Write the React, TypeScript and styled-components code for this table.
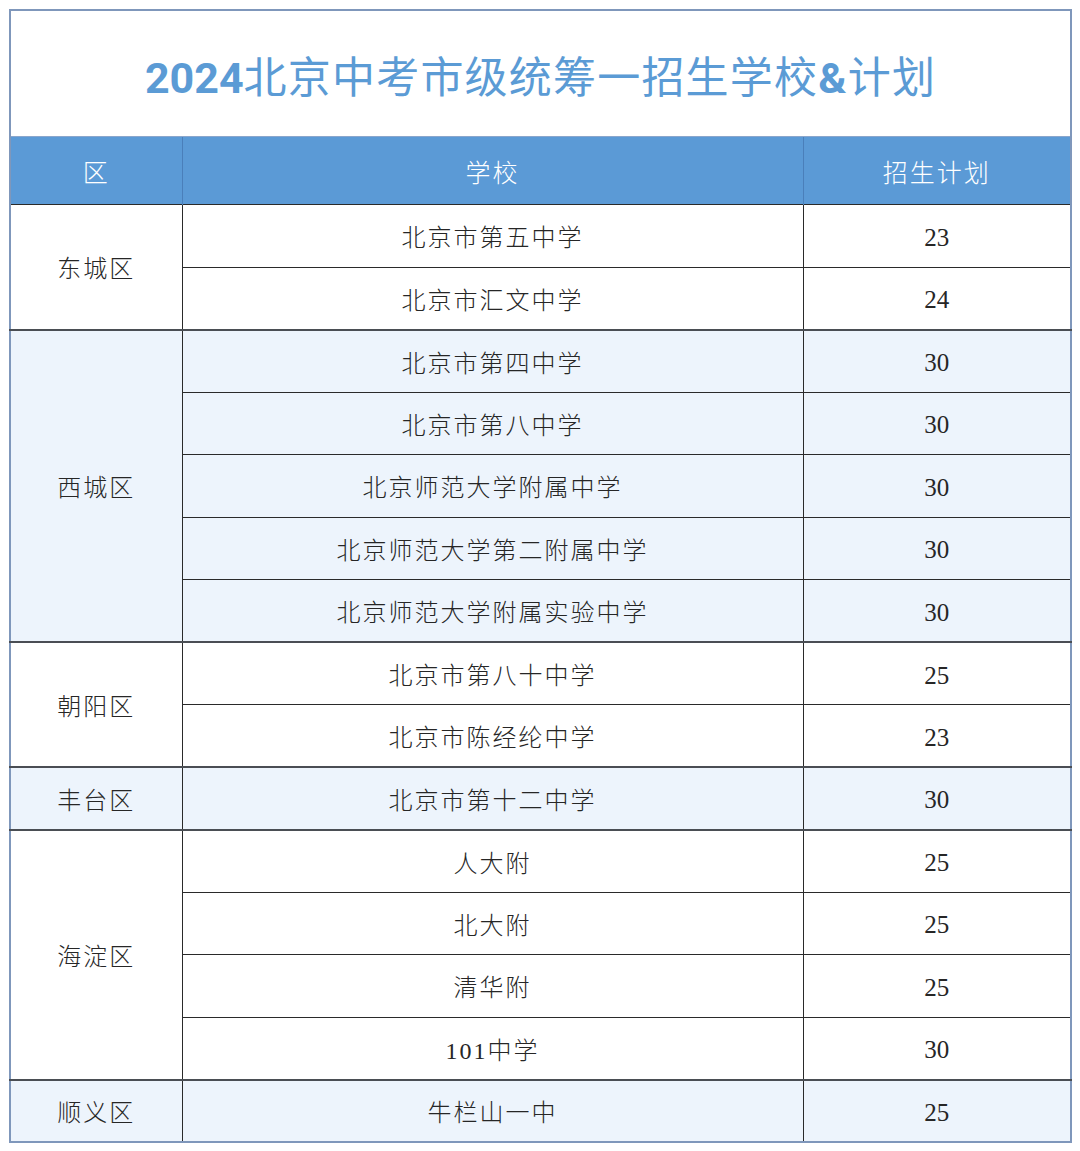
import React from "react";
import styled, { createGlobalStyle } from "styled-components";

const Global = createGlobalStyle`
  html, body { margin: 0; padding: 0; background: #ffffff; }
  body { font-family: "Liberation Serif", "Noto Sans CJK SC", serif; }
`;

const Page = styled.div`
  padding: 9px 0 0 9px;
  width: 1080px;
  box-sizing: border-box;
`;

const Table = styled.table`
  width: 1061px;
  border-collapse: collapse;
  table-layout: fixed;
  border: 2px solid #7f97bb;
`;

const Col = styled.col<{ $w: number }>`
  width: ${(p) => p.$w}px;
`;

const TitleCell = styled.th`
  height: 125px;
  padding: 0;
  background: #ffffff;
  color: #5b9bd5;
  font-family: "Noto Sans CJK SC", sans-serif;
  font-weight: 400;
  font-size: 43px;
  letter-spacing: 1.2px;
  text-align: center;
  vertical-align: middle;
  border-bottom: 1px solid #8aa6cc;
`;

const Year = styled.span`
  font-family: "Roboto", "Liberation Sans", sans-serif;
  font-weight: 700;
  font-size: 43px;
  letter-spacing: 0;
`;

const Amp = styled.span`
  font-family: "Roboto", "Liberation Sans", sans-serif;
  font-weight: 700;
`;

const HeadCell = styled.th`
  height: 67px;
  padding: 0;
  background: #5b9ad6;
  color: #ffffff;
  font-family: "Noto Sans CJK SC", sans-serif;
  font-weight: 300;
  font-size: 25px;
  letter-spacing: 2px;
  text-align: center;
  vertical-align: middle;
  border-left: 1px solid #4a7fba;
  &:first-child { border-left: none; }
`;

const Row = styled.tr<{ $tint: boolean }>`
  height: 62.5px;
  background: ${(p) => (p.$tint ? "#edf4fc" : "#ffffff")};
`;

const Cell = styled.td<{ $groupStart: boolean; $lead?: boolean }>`
  padding: 0;
  text-align: center;
  vertical-align: middle;
  color: #262626;
  font-family: "Liberation Serif", "Noto Sans CJK SC", serif;
  font-weight: 300;
  font-size: 24px;
  letter-spacing: 2px;
  border-left: ${(p) => (p.$lead ? "none" : "1.5px solid #2a2a2a")};
  border-top: ${(p) => (p.$groupStart ? "2px solid #4a4e54" : "1.5px solid #2a2a2a")};
`;

const NumCell = styled(Cell)`
  font-size: 25px;
  letter-spacing: 0;
  padding-top: 4px;
`;

type Group = { district: string; rows: [string, number][] };

const data: Group[] = [
  { district: "东城区", rows: [["北京市第五中学", 23], ["北京市汇文中学", 24]] },
  {
    district: "西城区",
    rows: [
      ["北京市第四中学", 30],
      ["北京市第八中学", 30],
      ["北京师范大学附属中学", 30],
      ["北京师范大学第二附属中学", 30],
      ["北京师范大学附属实验中学", 30],
    ],
  },
  { district: "朝阳区", rows: [["北京市第八十中学", 25], ["北京市陈经纶中学", 23]] },
  { district: "丰台区", rows: [["北京市第十二中学", 30]] },
  {
    district: "海淀区",
    rows: [
      ["人大附", 25],
      ["北大附", 25],
      ["清华附", 25],
      ["101中学", 30],
    ],
  },
  { district: "顺义区", rows: [["牛栏山一中", 25]] },
];

export default function App() {
  return (
    <Page>
      <Global />
      <Table>
        <colgroup>
          <Col $w={172} />
          <Col $w={621} />
          <Col $w={268} />
        </colgroup>
        <thead>
          <tr>
            <TitleCell colSpan={3}>
              <Year>2024</Year>北京中考市级统筹一招生学校<Amp>&amp;</Amp>计划
            </TitleCell>
          </tr>
          <tr>
            <HeadCell>区</HeadCell>
            <HeadCell>学校</HeadCell>
            <HeadCell>招生计划</HeadCell>
          </tr>
        </thead>
        <tbody>
          {data.map((g, gi) =>
            g.rows.map(([school, n], ri) => (
              <Row key={`${gi}-${ri}`} $tint={gi % 2 === 1}>
                {ri === 0 && (
                  <Cell $lead $groupStart={gi > 0} rowSpan={g.rows.length}>
                    {g.district}
                  </Cell>
                )}
                <Cell $groupStart={ri === 0 && gi > 0}>{school}</Cell>
                <NumCell $groupStart={ri === 0 && gi > 0}>{n}</NumCell>
              </Row>
            ))
          )}
        </tbody>
      </Table>
    </Page>
  );
}
